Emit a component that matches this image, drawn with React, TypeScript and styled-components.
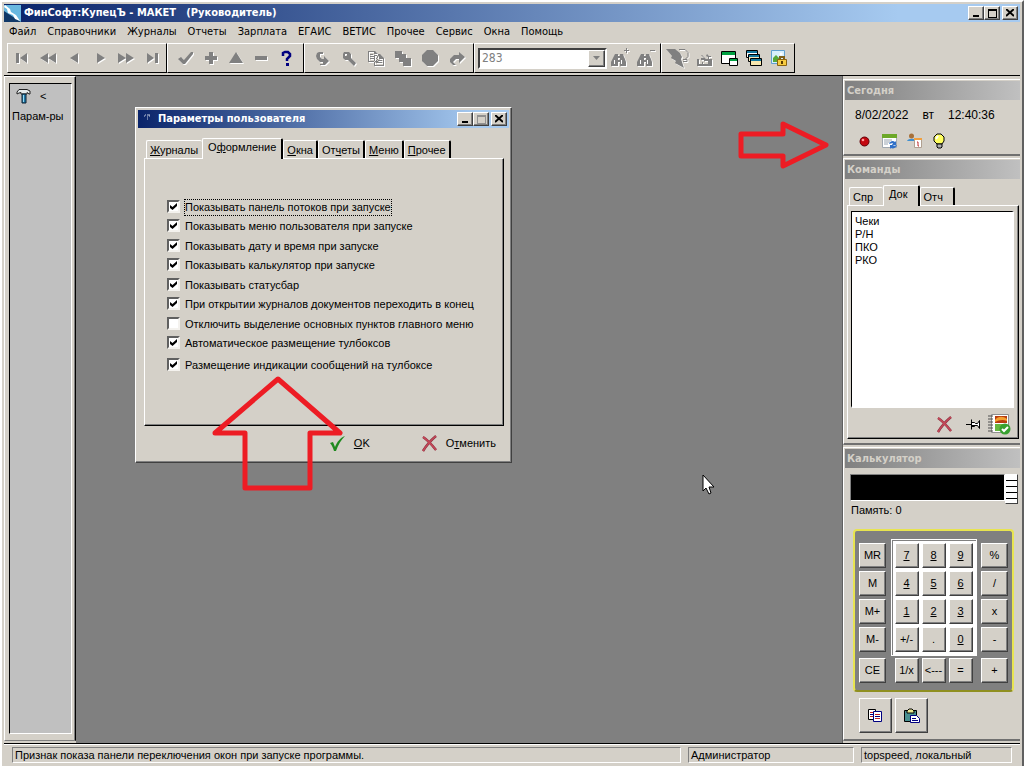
import React from "react";
import styled, { createGlobalStyle, css } from "styled-components";

const face = "#d4d0c8";
const ui = '"Liberation Sans", Arial, sans-serif';
const caption = '"DejaVu Sans Condensed", "DejaVu Sans", sans-serif';

const Global = createGlobalStyle`
  *, *::before, *::after { box-sizing: border-box; }
  body { margin: 0; background: ${face}; font: 11px/13px ${ui}; color: #000; }
  button, input { font: inherit; color: inherit; margin: 0; padding: 0; }
  button { background: none; border: 0; white-space: nowrap; }
  svg { display: block; flex: none; }
`;

const raised = css`
  border: 1px solid;
  border-color: #fff #404040 #404040 #fff;
  box-shadow: inset -1px -1px 0 #808080;
`;
const sunken = css`
  border: 1px solid;
  border-color: #808080 #fff #fff #808080;
`;

const Frame = styled.div`
  min-height: 100vh;
  display: flex;
  flex-direction: column;
  padding: 2px;
  border: 2px solid;
  border-color: #fff #606060 #606060 #fff;
  background: ${face};
`;

const TitleBar = styled.header<{ $soft?: boolean }>`
  display: flex;
  align-items: center;
  height: 18px;
  padding: 0 2px 0 0;
  background: linear-gradient(to right, #0a246a, #a6caf0 ${(p) => (p.$soft ? "92%" : "88%")});
  color: #fff;
`;
const TitleText = styled.h1`
  flex: 1;
  margin: 0 3px;
  font: bold 11px/18px ${caption};
  white-space: pre;
`;
const WindowButton = styled.button<{ $gap?: boolean }>`
  ${raised}
  display: grid;
  place-items: center;
  width: 16px;
  height: 14px;
  margin-left: ${(p) => (p.$gap ? 2 : 0)}px;
  background: ${face};
`;

const MenuBar = styled.nav`
  display: flex;
  height: 20px;
  align-items: center;
  padding-left: 5px;
  gap: 11px;
  font: 11px/18px ${caption};
`;
const MenuLink = styled.a`
  color: #000;
  text-decoration: none;
`;

const ToolBar = styled.div`
  display: flex;
  height: 34px;
  padding: 1px 0 2px 3px;
  border-bottom: 1px solid #000;
`;
const ToolGroup = styled.div<{ $pad: number }>`
  display: flex;
  align-items: center;
  height: 30px;
  padding: 0 ${(p) => p.$pad}px;
  border: 1px solid;
  border-color: #fff #000 #000 #fff;
`;
const ToolButton = styled.button<{ $w?: number; $off?: boolean }>`
  display: grid;
  place-items: center;
  width: ${(p) => p.$w || 25}px;
  height: 26px;
  svg { filter: ${(p) => (p.$off ? "drop-shadow(1px 1px 0 #fff)" : "none")}; }
`;
const Combo = styled.div`
  display: flex;
  width: 129px;
  height: 21px;
  margin-left: 2px;
  border: 2px solid;
  border-color: #404040 #fff #fff #404040;
  background: #fff;
`;
const ComboInput = styled.input`
  flex: 1;
  min-width: 0;
  padding: 0 2px;
  border: 0;
  background: #fff;
  color: #808080;
  font: 12px/16px ${caption};
`;
const ComboArrow = styled.button`
  ${raised}
  display: grid;
  place-items: center;
  width: 17px;
  background: ${face};
`;

const Main = styled.main`
  flex: 1;
  display: flex;
`;
const Side = styled.aside`
  width: 72px;
  display: flex;
  padding: 6px 3px 6px 4px;
  margin-bottom: 2px;
  border: 1px solid;
  border-color: #fff #000 #808080 #fff;
  box-shadow: inset -1px 0 0 #808080;
`;
const SideBox = styled.div`
  flex: 1;
  padding: 4px 2px;
  border: 1px solid;
  border-color: #000 #fff #fff #000;
  background: #c0c0c0;
`;
const SideTool = styled.button`
  display: flex;
  flex-direction: column;
  gap: 6px;
`;
const SideIcons = styled.span`
  display: flex;
  align-items: center;
  gap: 8px;
  padding-left: 4px;
`;
const Mdi = styled.section`
  position: relative;
  flex: 1;
  min-width: 0;
  background: #808080;
`;
const Annotation = styled.svg<{ $top: number; $left?: number; $right?: number }>`
  position: absolute;
  top: ${(p) => p.$top}px;
  left: ${(p) => (p.$left === undefined ? "auto" : p.$left + "px")};
  right: ${(p) => (p.$right === undefined ? "auto" : p.$right + "px")};
  pointer-events: none;
`;

const Dialog = styled.form`
  position: absolute;
  top: 31px;
  left: 59px;
  width: 377px;
  padding: 2px;
  ${raised}
  background: ${face};
`;
const DialogBody = styled.div`
  padding: 10px 5px 4px 6px;
`;
const TabRow = styled.div`
  display: flex;
  align-items: flex-end;
  padding-left: 2px;
`;
const Tab = styled.button<{ $on?: boolean; $joined?: boolean; $extra?: number }>`
  height: ${(p) => (p.$on ? 21 : 18)}px;
  padding: ${(p) => (p.$on ? "0 5px 3px" : "1px 3px 0 3px")};
  padding-right: ${(p) => (p.$extra || 0) + (p.$on ? 5 : 3)}px;
  margin-bottom: ${(p) => (p.$on ? -1 : 0)}px;
  border: solid;
  border-width: 1px ${(p) => (p.$joined ? 0 : 2)}px 0 1px;
  border-color: #fff #000 #fff #fff;
  border-radius: 2px 2px 0 0;
  background: ${face};
  z-index: ${(p) => (p.$on ? 1 : 0)};
`;
const TabPage = styled.div`
  border: 1px solid;
  border-color: #fff #000 #000 #fff;
  box-shadow: inset -1px -1px 0 #808080;
`;
const OptionList = styled(TabPage)`
  display: grid;
  grid-auto-rows: 19px 20px;
  align-items: start;
  justify-items: start;
  padding: 40px 0 51px 22px;
`;
const Option = styled.label<{ $apart?: boolean }>`
  display: flex;
  align-items: center;
  gap: 4px;
  height: 17px;
  margin-top: ${(p) => (p.$apart ? 2 : 0)}px;
`;
const Check = styled.input.attrs({ type: "checkbox" })`
  appearance: none;
  width: 13px;
  height: 13px;
  margin-bottom: 2px;
  display: grid;
  place-items: center;
  border: 2px solid;
  border-color: #606060 #f4f2ee #f4f2ee #606060;
  background: #fff;
  &:checked::after {
    content: "";
    width: 7px;
    height: 7px;
    background: #000;
    clip-path: polygon(0 29%, 36% 58%, 100% 0, 100% 43%, 36% 100%, 0 71%);
  }
`;
const OptionText = styled.span<{ $focus?: boolean }>`
  line-height: 15px;
  white-space: nowrap;
  border: 1px dotted ${(p) => (p.$focus ? "#000" : "transparent")};
`;
const Actions = styled.div`
  display: flex;
  justify-content: flex-end;
  gap: 51px;
  padding: 7px 8px 3px 0;
`;
const ActionButton = styled.button`
  display: flex;
  align-items: center;
  gap: 8px;
  height: 20px;
`;

const Right = styled.aside`
  width: 178px;
  display: flex;
  flex-direction: column;
  padding-top: 3px;
  border-left: 1px solid #606060;
`;
const Panel = styled.section<{ $grow?: boolean }>`
  flex: ${(p) => (p.$grow ? "1" : "none")};
  margin-bottom: 2px;
  padding: 1px 0 0 1px;
  border: solid;
  border-width: 1px 0 2px 1px;
  border-color: #fff #fff #707070 #fff;
`;
const PanelTitle = styled.h2`
  margin: 0;
  padding: 0 2px;
  height: 19px;
  background: linear-gradient(to right, #808080, #c0c0c0);
  color: ${face};
  font: bold 11px/20px ${caption};
`;
const DateRow = styled.div`
  display: flex;
  gap: 14px;
  padding: 9px 10px 6px;
  font-size: 12px;
`;
const IconRow = styled.div<{ $end?: boolean }>`
  display: flex;
  align-items: center;
  justify-content: ${(p) => (p.$end ? "flex-end" : "flex-start")};
  padding: ${(p) => (p.$end ? "3px 2px 1px" : "0 7px 4px")};
`;
const TodayBody = styled.div`
  height: 54px;
`;
const CommandBody = styled.div`
  padding: 6px 1px 4px 2px;
`;
const CommandPage = styled(TabPage)`
  padding: 5px 4px 0 3px;
`;
const List = styled.ul`
  height: 197px;
  margin: 0;
  padding: 3px;
  list-style: none;
  border: 2px solid;
  border-color: #000 #fff #fff #000;
  border-width: 1px 2px 2px 1px;
  background: #fff;
`;
const CalcBody = styled.div`
  padding: 6px 2px 6px 5px;
`;
const DisplayRow = styled.div`
  display: flex;
  align-items: flex-start;
`;
const Display = styled.output`
  flex: 1;
  height: 27px;
  ${sunken}
  background: #000;
`;
const Spinner = styled.div`
  display: grid;
  width: 13px;
  height: 30px;
  border: 1px solid;
  border-color: #fff #404040 #404040 #fff;
  background: repeating-linear-gradient(to bottom, #fff 0 5px, #000 5px 6px);
`;
const Memory = styled.p`
  margin: 0 0 12px 1px;
`;
const Keypad = styled.div`
  display: flex;
  justify-content: space-between;
  margin: 0 4px 5px 3px;
  padding: 8px 4px 7px;
  border: 2px solid;
  border-color: #e8e450 #e8e450 #8f8f20 #e8e450;
  border-radius: 4px;
  background: #808080;
`;
const KeyColumn = styled.div`
  display: grid;
  grid-template-rows: repeat(4, 25px) 28px;
  align-items: end;
  gap: 3px;
  padding-top: 4px;
`;
const KeyCenter = styled.div`
  display: flex;
  flex-direction: column;
  gap: 2px;
`;
const KeyWell = styled.div`
  display: grid;
  grid-template-columns: repeat(3, 24px);
  gap: 3px;
  padding: 3px;
  border: 1px solid #fff;
  box-shadow: inset 1px 1px 0 #808080;
  background: #fff;
`;
const KeyRow = styled.div`
  display: flex;
  gap: 3px;
  padding: 0 4px;
`;
const Key = styled.button<{ $wide?: boolean; $u?: boolean }>`
  ${raised}
  width: ${(p) => (p.$wide ? 27 : 24)}px;
  height: 25px;
  background: ${face};
  text-decoration: ${(p) => (p.$u ? "underline" : "none")};
`;
const ClipRow = styled.div`
  display: flex;
  gap: 3px;
  padding: 1px 9px 0;
`;
const ClipButton = styled.button`
  ${raised}
  display: grid;
  place-items: center;
  width: 33px;
  height: 35px;
`;

const StatusBar = styled.footer`
  display: flex;
  gap: 7px;
  padding: 3px 8px 3px;
  border-top: 1px solid #000;
  box-shadow: inset 0 1px 0 #fff;
`;
const StatusCell = styled.div<{ $w?: number }>`
  flex: ${(p) => (p.$w ? "none" : "1")};
  width: ${(p) => (p.$w ? p.$w + "px" : "auto")};
  height: 16px;
  padding: 0 2px;
  line-height: 14px;
  ${sunken}
`;

/* Flat single-colour toolbar glyph on a 20x20 grid */
const Glyph = ({ d, fill = "#808080" }: { d: string; fill?: string }) => (
  <svg width="20" height="20" viewBox="0 0 20 20" fill={fill} fillRule="evenodd" aria-hidden="true">
    <path d={d} />
  </svg>
);

const nav: [string, string][] = [
  ["В начало", "M4 5h3v10H4zM15 5v10L8 10z"],
  ["Страница назад", "M10 5v10L2 10zM18 5v10l-8-5z"],
  ["Назад", "M14 5v10L6 10z"],
  ["Вперёд", "M7 5v10l8-5z"],
  ["Страница вперёд", "M2 5v10l8-5zM10 5v10l8-5z"],
  ["В конец", "M5 5v10l7-5zM13 5h3v10h-3z"],
];
const edit: [string, string][] = [
  ["Выбрать", "M2 11l3-2 3 3 7-8h2v2L9 16H7z"],
  ["Добавить", "M8 4h4v4h4v4h-4v4H8v-4H4V8h4z"],
  ["Изменить", "M10 4l7 11H3z"],
  ["Удалить", "M4 8h12v4H4z"],
];
const misc: [string, string][] = [
  ["Вернуть", "M7 4h4v2H8v3l2 2h2V8l5 5-4 4H8v-1h3v-2H8L5 11 4 8l1-3z"],
  ["Найти", "M5 4h5l2 2v4l5 5-2 3-6-6H6L4 10V6zM6 6v2h2V6z"],
  ["Копировать", "M2 3h7l3 3v8H2zM3 4v9h8V7H8V4zM8 6h6l4 4v8H8zM9 8v9h8v-6h-4V8zM4 6h3v1H4zM4 8h4v1H4zM4 10h4v1H4zM10 10h2v1h-2zM10 12h6v1h-6zM10 14h6v1h-6z"],
  ["Дублировать", "M2 3h7v3h4v4h5v8h-8v-4H6v-4H2z"],
  ["Стоп", "M7 2h6l5 5v6l-5 5H7l-5-5V7z"],
  ["Повторить", "M12 4l6 5-6 6v-4H9l-3 3 3 3H6l-3-3v-3l4-4h5z"],
];
const binoc = "M5 6h3v2h2V6h3l1 3 1 2 1 3v4h-6v-4H8v4H1v-4l2-4zM4 12v4h1v-4zM11 12v4h1v-4zM8 10v2h2v-2z";

const Hammer = () => (
  <svg width="16" height="16" viewBox="0 0 16 16" aria-hidden="true">
    <path d="M1 4l2-2.500h8l3 1.500v3h-1L11 4.500V6H5V4.500L3 5 1 6z" fill="#e4eaec" stroke="#222" />
    <path d="M6 6h4v9H6z" fill="#1c78a8" stroke="#123" />
    <path d="M7 7h1v7H7z" fill="#9ad8f0" />
  </svg>
);
const RedCross = () => (
  <svg width="17" height="17" viewBox="0 0 17 17" aria-hidden="true" fill="none">
    <path d="M2 2C7 5 11 10 15 15M15 1C9 6 5 11 2 16" stroke="#8a3040" strokeWidth="2.500" />
    <path d="M2 2C7 5 11 10 15 15M15 1C9 6 5 11 2 16" stroke="#c44858" strokeWidth="1.500" />
  </svg>
);
const Min = () => <svg width="8" height="8" aria-hidden="true"><path d="M1 6h6v2H1z" /></svg>;
const Max = ({ off }: { off?: boolean }) => (
  <svg width="9" height="9" aria-hidden="true" fill={off ? "#909090" : "#000"} fillRule="evenodd">
    <path d="M0 0h9v9H0zM1 2v6h7V2z" />
  </svg>
);
const Close = () => (
  <svg width="8" height="8" aria-hidden="true"><path d="M0 0l8 7M8 0L0 7" stroke="#000" strokeWidth="2" /></svg>
);

const menu = ["Файл", "Справочники", "Журналы", "Отчеты", "Зарплата", "ЕГАИС", "ВЕТИС", "Прочее", "Сервис", "Окна", "Помощь"];
const options: [string, boolean][] = [
  ["Показывать панель потоков при запуске", true],
  ["Показывать меню пользователя при запуске", true],
  ["Показывать дату и время при запуске", true],
  ["Показывать калькулятор при запуске", true],
  ["Показывать статусбар", true],
  ["При открытии журналов документов переходить в конец", true],
  ["Отключить выделение основных пунктов главного меню", false],
  ["Автоматическое размещение тулбоксов", true],
  ["Размещение индикации сообщений на тулбоксе", true],
];
const digits = ["7", "8", "9", "4", "5", "6", "1", "2", "3", "+/-", ".", "0"];

const WindowButtons = ({ off }: { off?: boolean }) => (
  <>
    <WindowButton type="button" aria-label="Свернуть"><Min /></WindowButton>
    <WindowButton type="button" aria-label="Развернуть"><Max off={off} /></WindowButton>
    <WindowButton type="button" $gap aria-label="Закрыть"><Close /></WindowButton>
  </>
);

function MainToolbar() {
  const off = (items: [string, string][], w?: number) =>
    items.map(([name, d]) => (
      <ToolButton key={name} aria-label={name} $off $w={w}><Glyph d={d} /></ToolButton>
    ));
  return (
    <ToolBar>
      <ToolGroup $pad={1}>{off(nav, 26)}</ToolGroup>
      <ToolGroup $pad={5}>
        {off(edit)}
        <ToolButton aria-label="Справка">
          <svg width="20" height="20" viewBox="0 0 20 20" aria-hidden="true">
            <path d="M7 8V5l2-1h3l2 2v2l-3 3v2" fill="none" stroke="#000080" strokeWidth="2.500" />
            <path d="M10 15h3v3h-3z" fill="#000080" />
          </svg>
        </ToolButton>
      </ToolGroup>
      <ToolGroup $pad={3}>{off(misc, 27)}</ToolGroup>
      <ToolGroup $pad={1}>
        <Combo>
          <ComboInput aria-label="Номер" defaultValue="283" />
          <ComboArrow aria-label="Открыть список">
            <svg width="7" height="4" aria-hidden="true"><path d="M0 0h7L3.500 4z" fill="#808080" /></svg>
          </ComboArrow>
        </Combo>
        <ToolButton aria-label="Искать далее" $w={26} $off><Glyph d={binoc + "M16 0h1v2h2v1h-2v2h-1V3h-2V2h2z"} /></ToolButton>
        <ToolButton aria-label="Искать назад" $w={26} $off><Glyph d={binoc + "M14 2h5v1h-5z"} /></ToolButton>
      </ToolGroup>
      <ToolGroup $pad={3}>
        <ToolButton aria-label="Выполнить" $off $w={26}>
          <svg width="24" height="20" viewBox="0 0 24 20" aria-hidden="true">
            <path d="M0 1h9l5 4 2 4-1 2 3 9-9-5 1-2-5-3 1-2z" fill="#808080" />
            <path d="M13 1.500h6l3 3v4l-3 3M17 11.500h4v2h-4" fill="none" stroke="#808080" />
          </svg>
        </ToolButton>
        <ToolButton aria-label="Отправить" $off>
          <Glyph d="M3 11h2v5h3v-2h2v-2H7v-2h3L7 7h1l4 4h2V9l-2-1 1-2 2 2h2v1h-2v2h3v7H3zM9 14v2h5v-3h-3z" />
        </ToolButton>
        <ToolButton aria-label="Новое окно">
          <svg width="18" height="18" viewBox="0 0 18 18" aria-hidden="true">
            <path d="M1.500 2.500h14v12h-14z" fill="#fff" stroke="#000" /><path d="M2 3h13v3H2z" fill="#00a040" />
            <path d="M9.500 9.500h8v7h-8z" fill="#fff" stroke="#000" /><path d="M10 10h7v2h-7z" fill="#00a040" />
          </svg>
        </ToolButton>
        <ToolButton aria-label="Каскад">
          <svg width="18" height="18" viewBox="0 0 18 18" aria-hidden="true" stroke="#000">
            <path d="M1.500 1.500h11v7h-11z" fill="#fff" /><path d="M2 2h10v2H2z" fill="#1478a0" stroke="none" />
            <path d="M3.500 5.500h11v7h-11z" fill="#f8ecc0" /><path d="M4 6h10v2H4z" fill="#1478a0" stroke="none" />
            <path d="M5.500 9.500h11v7h-11z" fill="#f8e8b0" /><path d="M6 10h10v2H6z" fill="#1478a0" stroke="none" />
          </svg>
        </ToolButton>
        <ToolButton aria-label="Блокировка">
          <svg width="18" height="18" viewBox="0 0 18 18" aria-hidden="true">
            <path d="M1.500 1.500h13v13h-13z" fill="#d8f0fc" stroke="#60a0d0" />
            <path d="M3 13V9l3-3 4 4v3z" fill="#56a838" /><circle cx="11" cy="5" r="1.500" fill="#fff" />
            <path d="M10 11V8h4v3" fill="none" stroke="#806018" strokeWidth="2" />
            <path d="M7.500 10.500h9v6h-9z" fill="#f8cc40" stroke="#8a6410" /><path d="M11 12h2v3h-2z" fill="#5a3c00" />
          </svg>
        </ToolButton>
      </ToolGroup>
    </ToolBar>
  );
}

function SettingsDialog() {
  return (
    <Dialog onSubmit={(e) => e.preventDefault()}>
      <TitleBar $soft>
        <svg width="17" height="16" viewBox="0 0 17 16" aria-hidden="true">
          <path d="M7 4h1M9 4h3M6 5h1M9 6h1M9 8h1M11 5h1" stroke="#c8d0e0" />
        </svg>
        <TitleText as="h2">Параметры пользователя</TitleText>
        <WindowButtons off />
      </TitleBar>
      <DialogBody>
        <TabRow>
          <Tab type="button" $joined $extra={1}><u>Ж</u>урналы</Tab>
          <Tab type="button" $on>О<u>ф</u>ормление</Tab>
          <Tab type="button"><u>О</u>кна</Tab>
          <Tab type="button">От<u>ч</u>еты</Tab>
          <Tab type="button"><u>М</u>еню</Tab>
          <Tab type="button"><u>П</u>рочее</Tab>
        </TabRow>
        <OptionList>
          {options.map(([text, on], i) => (
            <Option key={text} $apart={i === options.length - 1}>
              <Check defaultChecked={on} />
              <OptionText $focus={i === 0}>{text}</OptionText>
            </Option>
          ))}
        </OptionList>
        <Actions>
          <ActionButton type="submit">
            <svg width="17" height="17" viewBox="0 0 17 17" aria-hidden="true">
              <path d="M1 8l3-1 2 5C8 7 11 3 16 1 12 5 9 10 7 16H5C4 13 3 10 1 8z" fill="#1f8a1f" />
            </svg>
            <span><u>O</u>K</span>
          </ActionButton>
          <ActionButton type="button">
            <RedCross />
            <span>О<u>т</u>менить</span>
          </ActionButton>
        </Actions>
      </DialogBody>
    </Dialog>
  );
}

function TodayPanel() {
  return (
    <Panel>
      <PanelTitle>Сегодня</PanelTitle>
      <TodayBody>
        <DateRow><span>8/02/2022</span><span>вт</span><time>12:40:36</time></DateRow>
        <IconRow>
          <ToolButton aria-label="Запись">
            <svg width="11" height="11" viewBox="0 0 11 11" aria-hidden="true">
              <circle cx="5.500" cy="5.500" r="4.500" fill="#c40810" stroke="#600008" /><circle cx="4" cy="4" r="1.300" fill="#ff9a9a" />
            </svg>
          </ToolButton>
          <ToolButton aria-label="Обновить">
            <svg width="17" height="17" viewBox="0 0 17 17" aria-hidden="true">
              <path d="M1.500 1.500h14v13h-14z" fill="#fff" stroke="#a0a8b0" /><path d="M1 1h15v4H1z" fill="#6ca828" />
              <path d="M3 7h8M3 9h6M3 11h4" stroke="#98a4b0" />
              <path d="M8 11c1-3 4-4 6-2l1-1v4h-4l1-2M16 12c-1 3-4 4-6 3l-1 1v-4h4l-1 1" fill="#3070c8" />
            </svg>
          </ToolButton>
          <ToolButton aria-label="Календарь">
            <svg width="16" height="16" viewBox="0 0 16 16" aria-hidden="true">
              <path d="M0 8c1-3 9-3 10 0z" fill="#4090d0" /><circle cx="4.500" cy="3" r="2.500" fill="#a87038" />
              <path d="M7.500 6.500h7v8h-7z" fill="#fff" stroke="#b0a090" /><path d="M7 5h8v2H7z" fill="#f0a040" />
              <path d="M10 9h1v4h1" fill="none" stroke="#c03030" />
            </svg>
          </ToolButton>
          <ToolButton aria-label="Совет">
            <svg width="13" height="16" viewBox="0 0 13 16" aria-hidden="true">
              <path d="M4 1h4l3 3v4l-2 3H4L1 8V4z" fill="#ffff60" stroke="#000" />
              <path d="M4 11h5v3l-1 1H5l-1-1z" fill="#b0b0b0" stroke="#000" /><path d="M3 6l2-3" stroke="#fff" strokeWidth="2" />
            </svg>
          </ToolButton>
        </IconRow>
      </TodayBody>
    </Panel>
  );
}

function CommandsPanel() {
  return (
    <Panel>
      <PanelTitle>Команды</PanelTitle>
      <CommandBody>
        <TabRow>
          <Tab $joined $extra={7}>Спр</Tab>
          <Tab $on $extra={5}>Док</Tab>
          <Tab $extra={7}>Отч</Tab>
        </TabRow>
        <CommandPage>
          <List>
            {["Чеки", "Р/Н", "ПКО", "РКО"].map((t) => <li key={t}>{t}</li>)}
          </List>
          <IconRow $end>
            <ToolButton aria-label="Удалить" $w={29}><RedCross /></ToolButton>
            <ToolButton aria-label="Закрепить" $w={28}>
              <svg width="15" height="11" viewBox="0 0 15 11" aria-hidden="true">
                <path d="M0 5h5v1H0z" />
                <path d="M5.500.5v10M5.500 3.500h3l1 1h2l2-3v8l-2-3h-2l-1 1h-3" fill="#fff" stroke="#000" />
                <path d="M6 6h5v1H6z" />
              </svg>
            </ToolButton>
            <ToolButton aria-label="Применить" $w={25}>
              <svg width="23" height="22" viewBox="0 0 23 22" aria-hidden="true">
                <path d="M3.500 1.500h17v18h-17z" fill="#fff" stroke="#909090" />
                <path d="M7 3h12v7H7z" fill="#b83c10" /><path d="M7 7c3-4 8-4 12-1v2c-4-2-8-1-12 1z" fill="#f4a030" />
                <path d="M7 11h8v7H7z" fill="#68b840" />
                <path d="M0 3h5M0 6h5M0 9h5M0 12h5M0 15h5M0 18h5" stroke="#505050" />
                <circle cx="17" cy="16" r="5.500" fill="#38a030" /><path d="M14 16l2 2 4-4" fill="none" stroke="#fff" strokeWidth="2" />
              </svg>
            </ToolButton>
          </IconRow>
        </CommandPage>
      </CommandBody>
    </Panel>
  );
}

function CalculatorPanel() {
  return (
    <Panel $grow>
      <PanelTitle>Калькулятор</PanelTitle>
      <CalcBody>
        <DisplayRow><Display aria-label="Результат" /><Spinner /></DisplayRow>
        <Memory>Память: 0</Memory>
        <Keypad>
          <KeyColumn>
            {["MR", "M", "M+", "M-", "CE"].map((k) => <Key key={k} $wide>{k}</Key>)}
          </KeyColumn>
          <KeyCenter>
            <KeyWell>
              {digits.map((k) => <Key key={k} $u={/\d/.test(k)}>{k}</Key>)}
            </KeyWell>
            <KeyRow>
              <Key>1/x</Key><Key>&lt;---</Key><Key>=</Key>
            </KeyRow>
          </KeyCenter>
          <KeyColumn>
            {["%", "/", "x", "-", "+"].map((k) => <Key key={k} $wide>{k}</Key>)}
          </KeyColumn>
        </Keypad>
        <ClipRow>
          <ClipButton aria-label="Копировать">
            <svg width="15" height="14" viewBox="0 0 15 14" aria-hidden="true" stroke="#000">
              <path d="M.5.5h7v10h-7z" fill="#fff" /><path d="M2 3.500h4M2 7.500h4" stroke="#c02020" /><path d="M2 5.500h4" stroke="#000080" />
              <path d="M5.500 2.500h8v10h-8z" fill="#fff" stroke="#000080" /><path d="M7 5.500h5M7 9.500h5" stroke="#c02020" /><path d="M7 7.500h5" stroke="#000080" />
            </svg>
          </ClipButton>
          <ClipButton aria-label="Вставить">
            <svg width="16" height="15" viewBox="0 0 16 15" aria-hidden="true">
              <path d="M.5 2.500h12v11H.5z" fill="#489090" stroke="#000" /><path d="M3 3l2-2h3l2 2v2H3z" fill="#e8e890" stroke="#000" />
              <path d="M6.500 7.500h6l3 3v4h-9z" fill="#fff" stroke="#000080" /><path d="M8 10.500h4M8 12.500h6" stroke="#000080" />
            </svg>
          </ClipButton>
        </ClipRow>
      </CalcBody>
    </Panel>
  );
}

export default function App() {
  return (
    <>
      <Global />
      <Frame>
        <TitleBar>
          <svg width="17" height="17" viewBox="0 0 17 17" aria-hidden="true">
            <path d="M0 0h17v17H0z" fill="#68b8e0" /><path d="M0 6l17 11H0z" fill="#103868" />
            <path d="M1 0l5 4 1 3 5 3 4 6-5-2-2-4-5-2-1-4-3-2z" fill="#fff" />
          </svg>
          <TitleText>{"ФинСофт:КупецЪ - МАКЕТ   (Руководитель)"}</TitleText>
          <WindowButtons />
        </TitleBar>
        <MenuBar>
          {menu.map((m) => <MenuLink key={m} href="#">{m}</MenuLink>)}
        </MenuBar>
        <MainToolbar />
        <Main>
          <Side>
            <SideBox>
              <SideTool>
                <SideIcons><Hammer /><span>&lt;</span></SideIcons>
                <span>Парам-ры</span>
              </SideTool>
            </SideBox>
          </Side>
          <Mdi>
            <SettingsDialog />
            <Annotation $top={296} $left={132} width="140" height="120" viewBox="208 372 140 120" fill="none" stroke="#ed1c24" strokeWidth="5" strokeLinejoin="round" aria-hidden="true">
              <path d="M278 379L340 433H310V488H245V433H215z" />
            </Annotation>
            <Annotation $top={42} $right={10} width="96" height="54" viewBox="736 118 96 54" fill="none" stroke="#ed1c24" strokeWidth="5" strokeLinejoin="round" aria-hidden="true">
              <path d="M741 134H783V124L826 145L783 166V156H741z" />
            </Annotation>
            <Annotation $top={398} $left={626} width="13" height="21" viewBox="0 0 13 21" fill="#fff" stroke="#000" aria-hidden="true">
              <path d="M1 1v16l3-3 3 6 2-1-2-6h5z" />
            </Annotation>
          </Mdi>
          <Right>
            <TodayPanel />
            <CommandsPanel />
            <CalculatorPanel />
          </Right>
        </Main>
        <StatusBar>
          <StatusCell>Признак показа панели переключения окон при запуске программы.</StatusCell>
          <StatusCell $w={166}>Администратор</StatusCell>
          <StatusCell $w={151}>topspeed, локальный</StatusCell>
        </StatusBar>
      </Frame>
    </>
  );
}
